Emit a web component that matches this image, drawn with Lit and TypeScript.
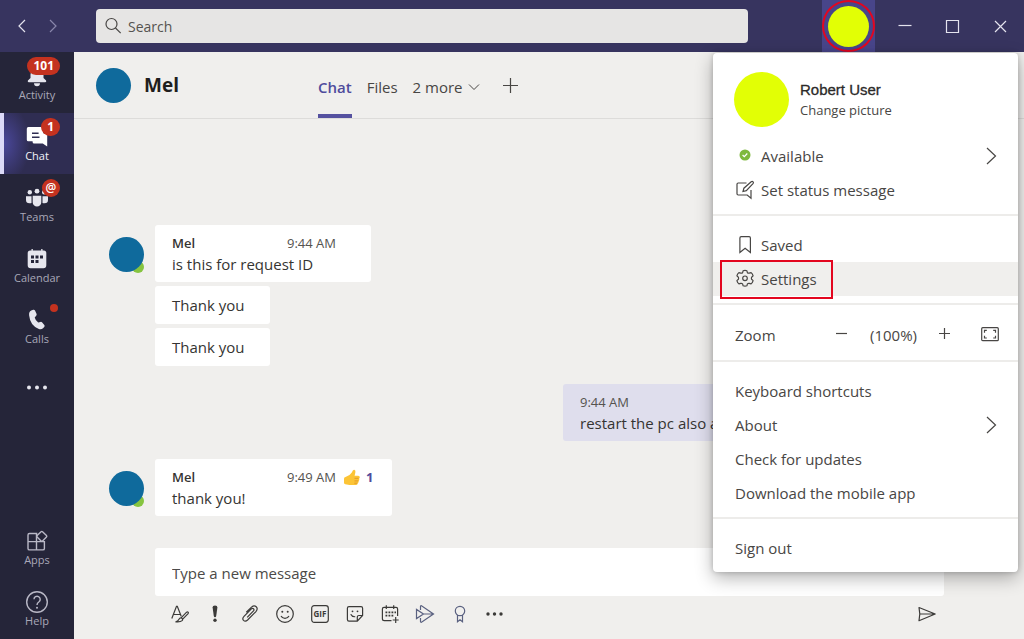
import { LitElement, html, css, svg, nothing, type TemplateResult } from "lit";
import { customElement } from "lit/decorators.js";
import { classMap } from "lit/directives/class-map.js";

const icons: Record<string, TemplateResult> = {
  back: svg`<svg viewBox="0 0 20 20" width="20" height="20"><path d="M13 4 7 10l6 6" /></svg>`,
  forward: svg`<svg viewBox="0 0 20 20" width="20" height="20"><path d="m7 4 6 6-6 6" /></svg>`,
  search: svg`<svg viewBox="0 0 20 20" width="20" height="20"><circle cx="8.500" cy="8" r="5.500" /><path d="m12.500 12 5.200 5.200" /></svg>`,
  minimise: svg`<svg viewBox="0 0 20 20" width="20" height="20"><path d="M4.500 9.500h13" /></svg>`,
  maximise: svg`<svg viewBox="0 0 20 20" width="20" height="20"><path d="M4.500 4.500h12v12h-12z" /></svg>`,
  close: svg`<svg viewBox="0 0 20 20" width="20" height="20"><path d="m5 5 11 11M16 5 5 16" /></svg>`,
  bell: svg`<svg viewBox="0 0 24 24" width="24" height="24" class="solid"><path d="M12 4a6.500 6.500 0 0 0-6.500 6.500v3.600L2.900 16.500q-.6 1.700.8 1.700h16.600q1.400 0 .8-1.700l-2.600-2.400v-3.600A6.500 6.500 0 0 0 12 4zM9 19.300h6a3 2.900 0 0 1-6 0z" /></svg>`,
  chat: svg`<svg viewBox="0 0 24 24" width="24" height="24" class="solid"><path d="M3.300 2h13.200q1.700 0 1.700 1.700v4.500h2.600q1.400 0 1.400 1.400v11.900l-4.400-2.900H9.200q-1.600 0-1.600-1.600v-.8H3.300q-1.500 0-1.500-1.500v-11Q1.800 2 3.300 2z" /><path class="cut" d="M7 8.300h6.600M7 12.300h7.500" /></svg>`,
  teams: svg`<svg viewBox="0 0 24 24" width="24" height="24" class="solid"><circle cx="4.800" cy="6.200" r="2.200" /><circle cx="12" cy="5.200" r="2.400" /><circle cx="19.200" cy="6.200" r="2.200" /><path d="M7.700 9.700h8.600v6.600a4.300 4.300 0 0 1-8.600 0zM1 10.300h5.500v6.700q-1 .4-2 .3-3.500-.3-3.500-3.400zM23 10.300h-5.500v6.700q1 .4 2 .3 3.500-.3 3.500-3.400z" /></svg>`,
  calendar: svg`<svg viewBox="0 0 24 24" width="24" height="24" class="solid"><path d="M6.500 2h1.300v1.500h8.400V2h1.300v1.500h1.300q2.500 0 2.500 2.500v12.300q0 2.900-2.900 2.900H5.600q-2.900 0-2.900-2.900V6q0-2.500 2.500-2.500h1.300z" /><path class="hole" d="M6 8.400h3v3H6zm4.500 0h3v3h-3zm4.500 0h3v3h-3zM6 12.900h3v3H6zm4.500 0h3v3h-3z" /></svg>`,
  phone: svg`<svg viewBox="0 0 24 24" width="24" height="24" class="solid"><path d="m6.200 2.500 2-.7q1.200-.3 1.800.8l1.500 3.100q.5 1.100-.3 2L9.700 9.400q.7 3 3.500 5.100l2.200-.6q1.100-.3 1.800.6l2.100 2.600q.8 1.100-.1 2l-1.200 1.100q-1.700 1.500-4.100.7Q5.200 17.800 4.100 7.200 3.800 3.500 6.200 2.500z" /></svg>`,
  dots: svg`<svg viewBox="0 0 24 24" width="24" height="24" class="solid"><circle cx="4" cy="18.500" r="2" /><circle cx="12" cy="18.500" r="2" /><circle cx="20" cy="18.500" r="2" /></svg>`,
  apps: svg`<svg viewBox="0 0 24 24" width="24" height="24"><path d="M12.300 4.500H4.500Q3 4.500 3 6v13.400q0 1.500 1.500 1.500h13.400q1.500 0 1.500-1.500v-6.800H3M11.500 4.500v16.400" /><rect x="13" y="3.500" width="7.600" height="7.600" rx="1" transform="rotate(45 16.800 7.300)" /></svg>`,
  help: svg`<svg viewBox="0 0 24 24" width="24" height="24"><circle cx="12" cy="12" r="10.300" /><path d="M9 9.300a3.100 3.100 0 1 1 5 2.500Q12 13.200 12 15" /><circle class="fill" cx="12" cy="17.700" r="1" /></svg>`,
  chevron: svg`<svg viewBox="0 0 12 12" width="12" height="12" class="thin"><path d="m1 3.500 5 5 5-5" /></svg>`,
  add: svg`<svg viewBox="0 0 18 18" width="18" height="18"><path d="M8.500 1v15M1 8.500h15" /></svg>`,
  status: svg`<svg viewBox="0 0 20 20" width="20" height="20"><path d="M11.500 3H3.200Q2 3 2 4.200v9.600Q2 15 3.200 15h9l3.800 3.200V10" /><path d="m8 11.500.9-3.300 7.300-6.500q1.100-.7 1.900.1.800.9-.1 1.900l-6.700 6.900z" /></svg>`,
  saved: svg`<svg viewBox="0 0 20 20" width="20" height="20"><path d="M6.200 1.700h7.900q1.300 0 1.300 1.300v14.500L10.100 13.300 4.900 17.500V3q0-1.300 1.300-1.300z" /></svg>`,
  settings: svg`<svg viewBox="0 0 20 20" width="20" height="20"><path d="M8.100 1.800Q10 1.100 11.900 1.800l.5 1.900q.8.700 1.800.4l1.900-.5q1.500 1.300 2 3.300l-1.500 1.400q-.4 1 0 1.900l1.500 1.400q-.5 2-2 3.300l-1.900-.5q-1-.2-1.800.5l-.5 1.900q-1.900.6-3.800 0l-.5-1.900q-.8-.7-1.800-.5l-1.900.5q-1.500-1.300-2-3.300l1.500-1.400q.4-1 0-1.900L1.900 6.900q.5-2 2-3.300l1.900.5q1 .3 1.800-.4z" stroke-linejoin="round" /><circle cx="10" cy="9.300" r="2.300" /></svg>`,
  arrow: svg`<svg viewBox="0 0 20 20" width="20" height="20"><path d="m6 2 8.500 8L6 18" /></svg>`,
  minus: svg`<svg viewBox="0 0 20 20" width="20" height="20"><path d="M4 8.500h11" /></svg>`,
  plus: svg`<svg viewBox="0 0 20 20" width="20" height="20"><path d="M4 8.500h11M9.500 3v11" /></svg>`,
  full: svg`<svg viewBox="0 0 20 20" width="20" height="20"><rect x="1.700" y="2.700" width="16.600" height="13" rx="1" /><path d="M4.500 7.700V5.400h2.300M13.200 5.400h2.300v2.300M15.500 10.700V13h-2.300M6.800 13H4.500v-2.300" /></svg>`,
  format: svg`<svg viewBox="0 0 20 20" width="20" height="20"><path d="M1.800 14.500 6.500 2.300h.8l3.900 10M3.300 10.500h7M5.500 17.800q2.500-.3 3.500-2.500.8-1.800 2.600-1.300 1.700 1.200.5 2.700-1.600 1.600-6.600 1.100zM11.300 13.700l5.300-5.500q.9-.6 1.500 0 .6.700 0 1.500l-5.400 5.400" /></svg>`,
  important: svg`<svg viewBox="0 0 20 20" width="20" height="20" class="solid"><path d="M10 1.500q2.500.1 2.400 2.100l-1.200 8.500q-.2 1.200-1.200 1.200t-1.200-1.200L7.600 3.600Q7.500 1.600 10 1.500z" /><circle cx="10" cy="16.300" r="1.700" /></svg>`,
  attach: svg`<svg viewBox="0 0 20 20" width="20" height="20"><path d="m7.200 13.300 6.300-6.500q1-1.200 0-2.100-1-.8-2.100.2L4 12.300q-2.100 2.200-.5 4.100 1.900 1.600 4.100-.4l8.300-8.400q2.400-2.900.3-4.900-2-1.800-4.700.4L6.300 8.200" /></svg>`,
  smile: svg`<svg viewBox="0 0 20 20" width="20" height="20"><circle cx="10" cy="10" r="8.300" /><path d="M6 12q1.300 2.400 4 2.400t4-2.400" /><circle class="fill" cx="7.300" cy="7.700" r="1" /><circle class="fill" cx="12.700" cy="7.700" r="1" /></svg>`,
  gif: svg`<svg viewBox="0 0 20 20" width="20" height="20"><rect x="1.700" y="1.700" width="16.600" height="16.600" rx="2.500" /><text x="10" y="13" text-anchor="middle" class="gif">GIF</text></svg>`,
  sticker: svg`<svg viewBox="0 0 20 20" width="20" height="20"><path d="M4 2.600h12q1.600 0 1.600 1.600v7.300l-5.300 5.700H4q-1.600 0-1.600-1.600V4.200Q2.400 2.600 4 2.600zM12.300 17v-3.900q0-1.600 1.600-1.600h3.600M5.700 10.300q1.300 2.700 4.500 2.400" /><circle class="fill" cx="7.500" cy="7.300" r=".9" /><circle class="fill" cx="12.500" cy="7.300" r=".9" /></svg>`,
  meeting: svg`<svg viewBox="0 0 20 20" width="20" height="20"><path d="M11.500 16.700H4.300q-1.900 0-1.900-1.900V5q0-1.600 1.600-1.600h12q1.600 0 1.600 1.600v7M6.300 1.300v3.800M13.700 1.300v3.800M15.700 13v6M12.700 16h6" /><path class="fill" d="M5.500 7.500h1.800v1.800H5.500zm3 0h1.800v1.800H8.500zm3 0h1.800v1.800h-1.800zm3 0h1.500v1.800h-1.500zm-9 3.300h1.800v1.800H5.500zm3 0h1.800v1.800H8.500zm3 0h1.800v1.800h-1.800z" /></svg>`,
  stream: svg`<svg viewBox="0 0 20 20" width="20" height="20" class="blue"><path d="M5.500 6V2.300q.2-.8 1-.5l12 8.200-12 8.200q-.8.300-1-.5V14M1.500 5.400v9.200l7-4.600zM8.500 10h10" /></svg>`,
  praise: svg`<svg viewBox="0 0 20 20" width="20" height="20" class="blue"><circle cx="10" cy="7" r="4.700" /><path d="M7.500 11v6.700l2.500-2 2.500 2V11" /></svg>`,
  more: svg`<svg viewBox="0 0 20 20" width="20" height="20" class="solid"><circle cx="3" cy="10" r="1.700" /><circle cx="9.500" cy="10" r="1.700" /><circle cx="16" cy="10" r="1.700" /></svg>`,
  send: svg`<svg viewBox="0 0 20 20" width="20" height="20"><path d="M2 3.500 18.200 10 2 16.700l.8-6.700zM2.800 10h14" stroke-linejoin="round" /></svg>`,
  check: svg`<svg viewBox="0 0 20 20" width="20" height="20"><circle class="dot" cx="10" cy="9" r="5.500" /><path class="tick" d="m7.600 9 1.700 1.700 3-3.200" /></svg>`,
  thumb: svg`<svg viewBox="0 0 18 18" width="18" height="18"><path class="palm" d="M1 10.800q0-1.500 1.500-1.800 4-.8 6.300-4.500Q9.900 1.300 11.300 1.700q1.700.6 1 3.100L11.600 7.800h3.700q1.600.2 1.500 1.600-.1.700-.7 1.100.8 1.800-.5 2.600.4 1.500-.9 2.200 0 1.700-1.600 1.700H6.500L2.300 16.300Q1 16 1 14.700z" /><path class="crease" d="M11.500 10.300h4M11.500 12.900h3.800M11.300 15.200h3" /></svg>`,
};

interface RailItem { icon: string; label: string; badge?: string; dot?: boolean; active?: boolean; }

const railTop: RailItem[] = [
  { icon: "bell", label: "Activity", badge: "101" },
  { icon: "chat", label: "Chat", badge: "1", active: true },
  { icon: "teams", label: "Teams", badge: "@" },
  { icon: "calendar", label: "Calendar" },
  { icon: "phone", label: "Calls", dot: true },
  { icon: "dots", label: "" },
];
const railBottom: RailItem[] = [
  { icon: "apps", label: "Apps" },
  { icon: "help", label: "Help" },
];
const tools: [string, string][] = [
  ["format", "Format"], ["important", "Set delivery options"], ["attach", "Attach"], ["smile", "Emoji"], ["gif", "GIF"],
  ["sticker", "Sticker"], ["meeting", "Schedule a meeting"], ["stream", "Stream"], ["praise", "Praise"], ["more", "More options"],
];

const shared = css`
  *, *::after { box-sizing: border-box; }
  button, input { font: inherit; color: inherit; border: 0; background: none; padding: 0; margin: 0; outline: 0; }
  button { display: flex; align-items: center; justify-content: center; text-align: left; white-space: nowrap; }
  svg { display: block; flex: none; fill: none; stroke: currentColor; stroke-width: 1.2; }
  .solid, .fill { fill: currentColor; stroke: none; }
  .thin { stroke-width: 1; }
`;

@customElement("title-bar")
class TitleBar extends LitElement {
  static styles = [shared, css`
    :host { display: flex; align-items: center; height: 52px; background: #37345f; color: #e4e3ee; }
    .nav { display: flex; width: 96px; padding-left: 6px; }
    .nav button { width: 31px; height: 32px; }
    .nav .off { color: #8986ab; }
    .search { flex: 1; display: flex; align-items: center; gap: 5px; height: 34px; padding-left: 7px; background: #e6e5e4; border-radius: 4px; color: #484644; }
    .search input { flex: 1; min-width: 0; font-size: 14px; }
    .search input::placeholder { color: #55534f; opacity: 1; }
    .me { width: 53px; height: 52px; margin: 0 5px 0 74px; background: #48458a; }
    .ring { display: flex; align-items: center; justify-content: center; width: 53px; height: 52px; border: 2px solid #e3061f; border-radius: 50%; }
    .face { width: 41px; height: 41px; border-radius: 50%; background: #e2ff05; }
    .win { width: 48px; height: 52px; }
  `];
  render() {
    return html`
      <nav class="nav">
        <button aria-label="Back">${icons.back}</button>
        <button class="off" aria-label="Forward">${icons.forward}</button>
      </nav>
      <label class="search">${icons.search}<input type="text" placeholder="Search" aria-label="Search" /></label>
      <button class="me" aria-label="Profile"><span class="ring"><span class="face"></span></span></button>
      <button class="win" aria-label="Minimise">${icons.minimise}</button>
      <button class="win" aria-label="Maximise">${icons.maximise}</button>
      <button class="win" aria-label="Close">${icons.close}</button>`;
  }
}

@customElement("app-rail")
class AppRail extends LitElement {
  static styles = [shared, css`
    :host { display: flex; flex-direction: column; justify-content: space-between; width: 74px; background: #252539; color: #a9a8b8; font-size: 11px; line-height: 14px; }
    .item { position: relative; flex-direction: column; justify-content: flex-start; width: 100%; height: 61px; padding-top: 12px; }
    .item svg { color: #e6e6ee; stroke-width: 1.400; }
    .outline svg { color: #b9b8c6; }
    .item.active { color: #f3f2f9; border-left: 4px solid #dcdaf8; padding-right: 4px; background: radial-gradient(ellipse 26px 40px at 0 50%, #4a479a, #2f2d52); }
    .item.active svg { color: #fff; }
    .item svg .cut { stroke: #2f2d52; }
    .item svg .hole { fill: #252539; }
    .badge { position: absolute; top: 5px; right: 14px; min-width: 18px; height: 18px; padding: 0 6px; border-radius: 9px; background: #c4321f; color: #fff; font-size: 12px; font-weight: 700; line-height: 17px; text-align: center; }
    .badge.at { padding: 0 3px; font-weight: 600; }
    .dot { position: absolute; top: 8px; right: 16px; width: 8px; height: 8px; border-radius: 50%; background: #c4321f; }
  `];
  item(i: RailItem, outline = false) {
    return html`<button class=${classMap({ item: true, active: !!i.active, outline })} aria-label=${i.label || "More apps"}>
      ${icons[i.icon]}<span>${i.label}</span>
      ${i.badge ? html`<span class=${classMap({ badge: true, at: i.badge === "@" })}>${i.badge}</span>` : nothing}
      ${i.dot ? html`<span class="dot"></span>` : nothing}
    </button>`;
  }
  render() {
    return html`<div>${railTop.map((i) => this.item(i))}</div><div>${railBottom.map((i) => this.item(i, true))}</div>`;
  }
}

@customElement("chat-pane")
class ChatPane extends LitElement {
  static styles = [shared, css`
    :host { display: flex; flex-direction: column; min-width: 0; background: #f0efed; color: #353432; font-size: 15px; line-height: 22px; }
    .head { display: flex; height: 67px; padding-left: 22px; border-bottom: 1px solid #dddcda; align-items: center; }
    .avatar { position: relative; flex: none; width: 35px; height: 35px; border-radius: 50%; background: #0f6a9c; }
    h1 { width: 174px; margin: 0 0 0 13px; font-size: 19px; line-height: 26px; color: #1f1e1d; }
    .tabs { display: flex; align-self: stretch; gap: 15px; color: #484644; }
    .tabs button { gap: 5px; padding-top: 4px; font-size: 15px; }
    .tabs .on { color: #4f4b9c; font-weight: 600; border-bottom: 4px solid #55519f; padding-top: 8px; }
    .tabs .plus { margin-left: 7px; padding-top: 2px; }
    .log { flex: 1; display: flex; flex-direction: column; justify-content: flex-end; padding: 0 80px 32px 35px; gap: 18px; }
    .group { position: relative; z-index: 0; display: flex; gap: 11px; align-items: flex-start; }
    .group .avatar { margin-top: 12px; }
    .presence { position: absolute; z-index: -1; right: 0; bottom: -1px; width: 12px; height: 12px; border-radius: 50%; background: #86c440; }
    .stack { display: flex; flex-direction: column; align-items: flex-start; gap: 4px; }
    .bubble { padding: 8px 17px 7px; background: #fff; border-radius: 3px; }
    .bubble.short { padding: 8px 25px 8px 17px; }
    .bubble.wide { padding-right: 35px; }
    .bubble.react { padding-right: 19px; }
    .own { align-self: flex-end; width: 381px; background: #dfdeed; }
    .meta { display: flex; align-items: center; font-size: 13px; line-height: 20px; color: #55534f; }
    .meta b { width: 115px; color: #353432; font-weight: 600; }
    .meta svg { margin: 0 5px 0 7px; }
    .meta strong { color: #4f4b9c; }
    .palm { fill: #fcc436; stroke: none; }
    .crease { stroke: #e0992a; stroke-width: 1; }
    .compose { padding: 0 80px 0 81px; }
    .compose input { display: block; width: 100%; height: 48px; padding: 2px 17px 0; background: #fff; border-radius: 3px; font-size: 15px; }
    .compose input::placeholder { color: #4c4a48; opacity: 1; }
    .tools { display: flex; height: 43px; padding: 0 0 8px 7px; align-items: center; color: #3b3a38; }
    .tools button { width: 35px; height: 35px; }
    .tools .send { margin-left: auto; }
    .blue { color: #5a6180; }
    .gif { fill: currentColor; stroke: none; font-size: 8px; font-weight: 700; }
  `];
  face() { return html`<span class="avatar"><span class="presence"></span></span>`; }
  render() {
    return html`
      <header class="head">
        <span class="avatar"></span>
        <h1>Mel</h1>
        <nav class="tabs">
          <button class="on">Chat</button>
          <button>Files</button>
          <button>2 more ${icons.chevron}</button>
          <button class="plus" aria-label="Add a tab">${icons.add}</button>
        </nav>
      </header>
      <section class="log">
        <div class="group">
          ${this.face()}
          <div class="stack">
            <div class="bubble wide"><div class="meta"><b>Mel</b><span>9:44 AM</span></div>is this for request ID</div>
            <div class="bubble short">Thank you</div>
            <div class="bubble short">Thank you</div>
          </div>
        </div>
        <div class="bubble own"><div class="meta">9:44 AM</div>restart the pc also a</div>
        <div class="group">
          ${this.face()}
          <div class="bubble react"><div class="meta"><b>Mel</b><span>9:49 AM</span>${icons.thumb}<strong>1</strong></div>thank you!</div>
        </div>
      </section>
      <footer class="compose">
        <input type="text" placeholder="Type a new message" aria-label="Type a new message" />
        <div class="tools">
          ${tools.map(([name, label]) => html`<button aria-label=${label}>${icons[name]}</button>`)}
          <button class="send" aria-label="Send">${icons.send}</button>
        </div>
      </footer>`;
  }
}

@customElement("profile-menu")
class ProfileMenu extends LitElement {
  static styles = [shared, css`
    :host { display: block; width: 305px; background: #fff; border-radius: 4px; box-shadow: 0 6px 18px rgba(0, 0, 0, 0.3), 0 0 5px rgba(0, 0, 0, 0.2); color: #484644; font-size: 15px; line-height: 20px; }
    .profile { display: flex; align-items: center; gap: 11px; padding: 19px 21px 0; }
    .face { width: 55px; height: 55px; border-radius: 50%; background: #e2ff05; }
    .name { font-family: "Liberation Sans", Arial, sans-serif; color: #2b2a29; font-size: 15px; -webkit-text-stroke: 0.3px #2b2a29; }
    .change { font-size: 13px; }
    .section { padding: 12px 0 7px; }
    .section + .section { border-top: 2px solid #edecea; }
    .row { position: relative; width: 100%; height: 34px; gap: 6px; padding: 0 17px 0 22px; justify-content: flex-start; }
    .row .end { margin-left: auto; }
    .current { background: #f0efed; }
    .current::after { content: ""; position: absolute; inset: -2px auto -3px 7px; width: 113px; border: 2px solid #e3061f; }
    .zoom { display: flex; align-items: center; height: 36px; padding: 0 18px 0 22px; }
    .zoom .label { flex: 1; }
    .zoom output { padding: 0 18px; }
    .zoom .full { margin-left: 25px; }
    .dot { fill: #7fb93d; stroke: none; }
    .tick { stroke: #fff; }
  `];
  row(label: string, icon?: string, arrow = false, current = false) {
    return html`<button class=${classMap({ row: true, current })}>${icon ? icons[icon] : nothing}<span>${label}</span>${arrow ? html`<span class="end">${icons.arrow}</span>` : nothing}</button>`;
  }
  render() {
    return html`
      <div class="profile">
        <span class="face"></span>
        <div><div class="name">Robert User</div><button class="change">Change picture</button></div>
      </div>
      <div class="section">${this.row("Available", "check", true)}${this.row("Set status message", "status")}</div>
      <div class="section">${this.row("Saved", "saved")}${this.row("Settings", "settings", false, true)}</div>
      <div class="section"><div class="zoom">
        <span class="label">Zoom</span>
        <button aria-label="Zoom out">${icons.minus}</button><output>(100%)</output><button aria-label="Zoom in">${icons.plus}</button>
        <button class="full" aria-label="Full screen">${icons.full}</button>
      </div></div>
      <div class="section">${this.row("Keyboard shortcuts")}${this.row("About", undefined, true)}${this.row("Check for updates")}${this.row("Download the mobile app")}</div>
      <div class="section">${this.row("Sign out")}</div>`;
  }
}

@customElement("app-root")
class AppRoot extends LitElement {
  static styles = css`
    :host { position: relative; display: grid; grid-template: auto 1fr / auto 1fr; min-height: 100vh; font-family: "Open Sans", "Noto Sans", sans-serif; }
    title-bar { grid-column: 1 / -1; }
    profile-menu { position: absolute; top: 53px; right: 6px; }
  `;
  render() {
    return html`<title-bar></title-bar><app-rail></app-rail><chat-pane></chat-pane><profile-menu></profile-menu>`;
  }
}
